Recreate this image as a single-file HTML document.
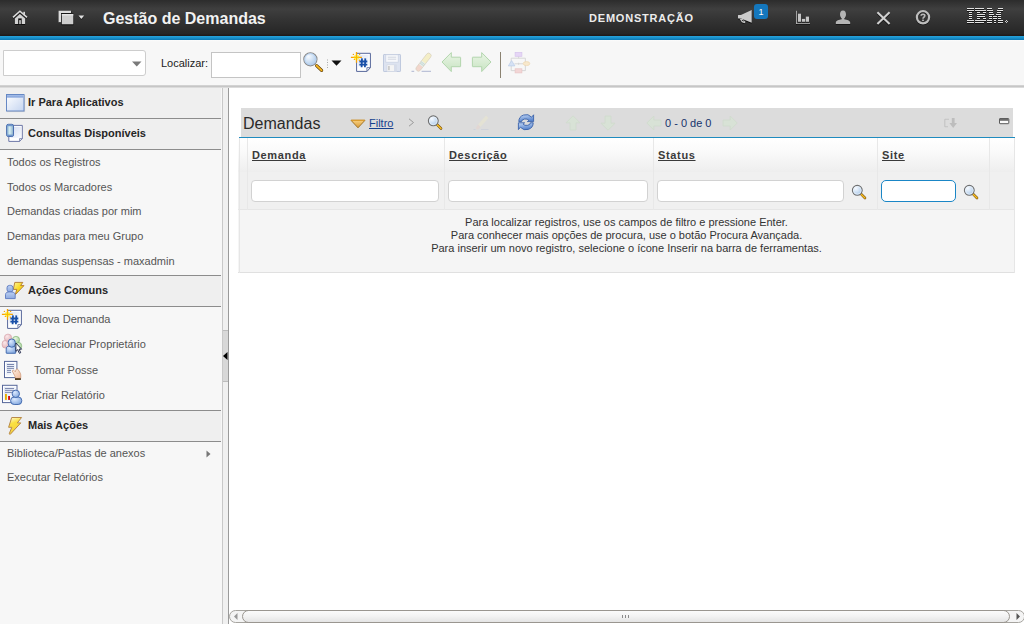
<!DOCTYPE html>
<html><head><meta charset="utf-8">
<style>
*{box-sizing:border-box;margin:0;padding:0}
html,body{width:1024px;height:624px;overflow:hidden;background:#fff;font-family:"Liberation Sans",sans-serif;position:relative}
.a{position:absolute}
svg{position:absolute;overflow:visible}
#hdr{left:0;top:0;width:1024px;height:36px;background:linear-gradient(#2c2c2c 0px,#3f3f3f 9px,#333 20px,#262626 34px,#1f1b1b 35px)}
#blue{left:0;top:36px;width:1024px;height:4px;background:linear-gradient(#29a3da,#1891cc 50%,#0e78b3)}
#tb{left:0;top:40px;width:1024px;height:45px;background:linear-gradient(#fcfcfc 0,#f7f7f7 2px)}
#tbb{left:0;top:85px;width:1024px;height:3px;background:linear-gradient(#d8d8d8,#c6c6c6,#e6e6e6)}
.title{color:#f2f2f2;font-weight:bold;font-size:16px;line-height:20px;white-space:nowrap}
.demo{color:#ececec;font-weight:bold;font-size:11px;letter-spacing:0.8px;line-height:14px;white-space:nowrap}
#left{left:0;top:88px;width:222px;height:536px;background:#f7f7f7}
#split{left:222px;top:88px;width:7px;height:536px;background:#f0f0f0;border-left:1px solid #c8c8c8;border-right:1px solid #9a9a9a}
#main{left:229px;top:88px;width:795px;height:536px;background:#fff}
.sec{position:absolute;left:0;width:221px;height:31px;background:#efefef;border-bottom:1px solid #8c8c8c}
.sec span{position:absolute;left:28px;top:8px;font-weight:bold;font-size:11px;line-height:13px;color:#262626;white-space:nowrap}
.it{position:absolute;left:7px;font-size:11px;line-height:13px;color:#555;white-space:nowrap}
.ai{position:absolute;left:34px;font-size:11px;line-height:13px;color:#555;white-space:nowrap}
.inp{position:absolute;background:#fff;border:1px solid #c9c9c9}
.th{position:absolute;top:149px;font-weight:bold;font-size:11px;letter-spacing:0.65px;line-height:13px;color:#3a3a3a;text-decoration:underline;white-space:nowrap}
.msg{position:absolute;left:238px;width:777px;text-align:center;font-size:11px;line-height:13px;color:#333;white-space:nowrap}
</style></head><body>
<div id="hdr" class="a"></div>
<div id="blue" class="a"></div>
<div id="tb" class="a"></div>
<div id="tbb" class="a"></div>

<!-- header icons -->
<svg style="left:12px;top:10px" width="16" height="17" viewBox="0 0 16 17">
  <path d="M1 8.2 L7.9 2 L15 8.2" fill="none" stroke="#0e0e0e" stroke-width="1.7"/>
  <path d="M2.9 9.2 L7.9 4.9 L13.1 9.2 V15.1 H2.9 Z" fill="#0e0e0e"/>
  <path d="M1 7.4 L7.9 1.2 L15 7.4" fill="none" stroke="#dcdcdc" stroke-width="1.6"/>
  <rect x="11.3" y="1.8" width="1.7" height="3.4" fill="#d4d4d4"/>
  <path d="M2.9 8.4 L7.9 4.1 L13.1 8.4 V14.1 H2.9 Z" fill="#d2d2d2"/>
  <rect x="6.2" y="8.4" width="3.5" height="5.7" fill="#111"/>
  <rect x="7.2" y="10.1" width="1.6" height="4" fill="#cfcfcf"/>
</svg>
<svg style="left:58px;top:10px" width="28" height="16" viewBox="0 0 28 16">
  <path d="M1 1.6 H13.4 V3.8 H3.4 V13.1 H1 Z" fill="#0e0e0e"/>
  <path d="M0.6 0.8 H13 V3 H3 V12.3 H0.6 Z" fill="#dcdcdc"/>
  <rect x="3.6" y="4.7" width="11.9" height="10.6" fill="#0e0e0e"/>
  <rect x="3.1" y="3.4" width="12.4" height="11.2" fill="#141414"/>
  <rect x="3.8" y="4" width="11.5" height="10.3" rx="0.4" fill="#cdcdcd"/>
  <rect x="3.8" y="4" width="11.5" height="1.6" rx="0.4" fill="#e4e4e4"/>
  <path d="M20.5 6.3 L26.2 6.3 L23.35 9.8 Z" fill="#0e0e0e"/>
  <path d="M20.5 5.6 L26.2 5.6 L23.35 9 Z" fill="#e0e0e0"/>
</svg>
<div class="a title" style="left:103px;top:9px">Gestão de Demandas</div>
<div class="a demo" style="left:589px;top:11px">DEMONSTRAÇÃO</div>

<!-- megaphone -->
<svg style="left:737px;top:9px" width="16" height="16" viewBox="0 0 16 16">
  <g transform="translate(0,0.9)" fill="#0e0e0e">
    <path d="M1 6.3 Q1 5.9 1.5 5.9 L3.9 5.9 L14.7 1 V13.8 L4 9.6 H1.5 Q1 9.6 1 9.1 Z"/>
    <path d="M2.6 9.8 L5.4 9.8 L8.6 12.9 L7.6 14.2 L4.8 13.3 Z"/>
  </g>
  <path d="M1 6.3 Q1 5.9 1.5 5.9 L3.9 5.9 L14.7 1 V13.8 L4 9.6 H1.5 Q1 9.6 1 9.1 Z" fill="#cbcbcb"/>
  <path d="M2.6 9.8 L5.4 9.8 L8.6 12.9 L7.6 14.2 L4.8 13.3 Z" fill="#c4c4c4"/>
  <path d="M4.6 10.9 L6 10.9 L7.3 12.4 L5.6 12.1 Z" fill="#1a1a1a"/>
</svg>
<div class="a" style="left:754px;top:4px;width:14px;height:15px;background:#1477bd;border-radius:3px;color:#fff;font-size:9px;font-weight:normal;line-height:16px;text-align:center">1</div>

<!-- chart -->
<svg style="left:795px;top:10px" width="16" height="16" viewBox="0 0 16 16">
  <g fill="#0e0e0e" transform="translate(0,0.9)">
    <rect x="1.1" y="0.8" width="0.8" height="13"/><rect x="1" y="12.9" width="14" height="0.8"/>
    <rect x="3" y="3.7" width="3" height="8.1"/><rect x="6.9" y="8.9" width="3.3" height="2.9"/><rect x="10.8" y="6.6" width="3.2" height="5.2"/>
  </g>
  <g fill="#c6c6c6">
    <rect x="1.1" y="0.8" width="0.8" height="13"/><rect x="1" y="12.9" width="14" height="0.8"/>
    <rect x="3" y="3.7" width="3" height="8.1"/><rect x="6.9" y="8.9" width="3.3" height="2.9"/><rect x="10.8" y="6.6" width="3.2" height="5.2"/>
  </g>
</svg>
<!-- user -->
<svg style="left:835px;top:10px" width="16" height="16" viewBox="0 0 16 16">
  <path d="M8 0.5 C10.3 0.5 11 2.5 11 4.5 C11 6.5 10 8 9.3 8.6 L9.3 9.3 C12 10 15 10.5 15.2 12.5 V14 H0.8 V12.5 C1 10.5 4 10 6.7 9.3 L6.7 8.6 C6 8 5 6.5 5 4.5 C5 2.5 5.7 0.5 8 0.5 Z" fill="#111" transform="translate(0,0.8)"/>
  <path d="M8 0.5 C10.3 0.5 11 2.5 11 4.5 C11 6.5 10 8 9.3 8.6 L9.3 9.3 C12 10 15 10.5 15.2 12.5 V14 H0.8 V12.5 C1 10.5 4 10 6.7 9.3 L6.7 8.6 C6 8 5 6.5 5 4.5 C5 2.5 5.7 0.5 8 0.5 Z" fill="#b4b4b4"/>
</svg>
<!-- X -->
<svg style="left:876px;top:11px" width="15" height="14" viewBox="0 0 15 14">
  <path d="M1.4 1.2 L13.6 13 M13.6 1.2 L1.4 13" stroke="#0e0e0e" stroke-width="2.3" transform="translate(0,0.8)"/>
  <path d="M1.4 1.2 L13.6 13 M13.6 1.2 L1.4 13" stroke="#d0d0d0" stroke-width="2.1"/>
</svg>
<!-- help -->
<svg style="left:915px;top:10px" width="16" height="16" viewBox="0 0 16 16">
  <circle cx="8" cy="7.3" r="6.1" fill="none" stroke="#0e0e0e" stroke-width="2.2" transform="translate(0,0.8)"/>
  <circle cx="8" cy="7.3" r="6.1" fill="none" stroke="#bdbdbd" stroke-width="2.2"/>
  <path d="M6.2 5.8 C6.2 3.7 9.8 3.7 9.8 5.8 C9.8 7.1 8 7.2 8 8.8" fill="none" stroke="#b8b8b8" stroke-width="1.6"/>
  <rect x="7.1" y="9.6" width="1.8" height="1.4" fill="#b8b8b8"/>
</svg>
<!-- IBM -->
<svg style="left:966px;top:8px" width="44" height="17" viewBox="0 0 44 17" shape-rendering="crispEdges"><rect x="1" y="1" width="7" height="1" fill="#151515"/><rect x="9" y="1" width="9" height="1" fill="#151515"/><rect x="21" y="1" width="5" height="1" fill="#151515"/><rect x="32" y="1" width="5" height="1" fill="#151515"/><rect x="1" y="3" width="7" height="1" fill="#151515"/><rect x="9" y="3" width="11" height="1" fill="#151515"/><rect x="21" y="3" width="6" height="1" fill="#151515"/><rect x="31" y="3" width="6" height="1" fill="#151515"/><rect x="3" y="5" width="3" height="1" fill="#151515"/><rect x="11" y="5" width="3" height="1" fill="#151515"/><rect x="17" y="5" width="3" height="1" fill="#151515"/><rect x="23" y="5" width="4" height="1" fill="#151515"/><rect x="31" y="5" width="4" height="1" fill="#151515"/><rect x="3" y="7" width="3" height="1" fill="#151515"/><rect x="11" y="7" width="8" height="1" fill="#151515"/><rect x="23" y="7" width="5" height="1" fill="#151515"/><rect x="30" y="7" width="5" height="1" fill="#151515"/><rect x="3" y="9" width="3" height="1" fill="#151515"/><rect x="11" y="9" width="8" height="1" fill="#151515"/><rect x="23" y="9" width="3" height="1" fill="#151515"/><rect x="27" y="9" width="4" height="1" fill="#151515"/><rect x="32" y="9" width="3" height="1" fill="#151515"/><rect x="3" y="11" width="3" height="1" fill="#151515"/><rect x="11" y="11" width="3" height="1" fill="#151515"/><rect x="17" y="11" width="3" height="1" fill="#151515"/><rect x="23" y="11" width="3" height="1" fill="#151515"/><rect x="27" y="11" width="4" height="1" fill="#151515"/><rect x="32" y="11" width="3" height="1" fill="#151515"/><rect x="1" y="13" width="7" height="1" fill="#151515"/><rect x="9" y="13" width="11" height="1" fill="#151515"/><rect x="21" y="13" width="5" height="1" fill="#151515"/><rect x="28" y="13" width="2" height="1" fill="#151515"/><rect x="32" y="13" width="5" height="1" fill="#151515"/><rect x="1" y="15" width="7" height="1" fill="#151515"/><rect x="9" y="15" width="9" height="1" fill="#151515"/><rect x="21" y="15" width="5" height="1" fill="#151515"/><rect x="28" y="15" width="2" height="1" fill="#151515"/><rect x="32" y="15" width="5" height="1" fill="#151515"/><rect x="1" y="0" width="7" height="1" fill="#e2e2e2"/><rect x="9" y="0" width="9" height="1" fill="#e2e2e2"/><rect x="21" y="0" width="5" height="1" fill="#e2e2e2"/><rect x="32" y="0" width="5" height="1" fill="#e2e2e2"/><rect x="1" y="2" width="7" height="1" fill="#e2e2e2"/><rect x="9" y="2" width="11" height="1" fill="#e2e2e2"/><rect x="21" y="2" width="6" height="1" fill="#e2e2e2"/><rect x="31" y="2" width="6" height="1" fill="#e2e2e2"/><rect x="3" y="4" width="3" height="1" fill="#e2e2e2"/><rect x="11" y="4" width="3" height="1" fill="#e2e2e2"/><rect x="17" y="4" width="3" height="1" fill="#e2e2e2"/><rect x="23" y="4" width="4" height="1" fill="#e2e2e2"/><rect x="31" y="4" width="4" height="1" fill="#e2e2e2"/><rect x="3" y="6" width="3" height="1" fill="#e2e2e2"/><rect x="11" y="6" width="8" height="1" fill="#e2e2e2"/><rect x="23" y="6" width="5" height="1" fill="#e2e2e2"/><rect x="30" y="6" width="5" height="1" fill="#e2e2e2"/><rect x="3" y="8" width="3" height="1" fill="#e2e2e2"/><rect x="11" y="8" width="8" height="1" fill="#e2e2e2"/><rect x="23" y="8" width="3" height="1" fill="#e2e2e2"/><rect x="27" y="8" width="4" height="1" fill="#e2e2e2"/><rect x="32" y="8" width="3" height="1" fill="#e2e2e2"/><rect x="3" y="10" width="3" height="1" fill="#e2e2e2"/><rect x="11" y="10" width="3" height="1" fill="#e2e2e2"/><rect x="17" y="10" width="3" height="1" fill="#e2e2e2"/><rect x="23" y="10" width="3" height="1" fill="#e2e2e2"/><rect x="27" y="10" width="4" height="1" fill="#e2e2e2"/><rect x="32" y="10" width="3" height="1" fill="#e2e2e2"/><rect x="1" y="12" width="7" height="1" fill="#e2e2e2"/><rect x="9" y="12" width="11" height="1" fill="#e2e2e2"/><rect x="21" y="12" width="5" height="1" fill="#e2e2e2"/><rect x="28" y="12" width="2" height="1" fill="#e2e2e2"/><rect x="32" y="12" width="5" height="1" fill="#e2e2e2"/><rect x="1" y="14" width="7" height="1" fill="#e2e2e2"/><rect x="9" y="14" width="9" height="1" fill="#e2e2e2"/><rect x="21" y="14" width="5" height="1" fill="#e2e2e2"/><rect x="28" y="14" width="2" height="1" fill="#e2e2e2"/><rect x="32" y="14" width="5" height="1" fill="#e2e2e2"/><rect x="40" y="12" width="1" height="1" fill="#ccc"/><rect x="39" y="13" width="1" height="1" fill="#ccc"/><rect x="41" y="13" width="1" height="1" fill="#ccc"/><rect x="40" y="14" width="1" height="1" fill="#ccc"/></svg>

<!-- toolbar -->
<div class="inp" style="left:3px;top:50px;width:143px;height:26px;border-radius:0 3px 3px 0;border-color:#cdcdcd"></div>
<svg style="left:132px;top:61px" width="10" height="6" viewBox="0 0 10 6"><path d="M0 0.5 H9.5 L4.75 5.5 Z" fill="#7a7a7a"/></svg>
<div class="a" style="left:161px;top:57px;font-size:11px;line-height:13px;color:#222;white-space:nowrap">Localizar:</div>
<div class="inp" style="left:211px;top:52px;width:90px;height:26px;border-color:#c4c4c4"></div>
<!-- magnifier big -->
<svg style="left:303px;top:52px" width="21" height="21" viewBox="0 0 21 21">
  <defs><radialGradient id="lens" cx="0.35" cy="0.3" r="0.75"><stop offset="0" stop-color="#f6faff"/><stop offset="0.6" stop-color="#c8dcf2"/><stop offset="1" stop-color="#a8c6ea"/></radialGradient></defs>
  <path d="M13.6 13.6 L18.6 18.4" stroke="#5a3a08" stroke-width="3.2" stroke-linecap="round"/>
  <path d="M13.6 13.6 L18.6 18.4" stroke="#f8b820" stroke-width="1.9" stroke-linecap="round"/>
  <circle cx="7.4" cy="7.3" r="6.6" fill="url(#lens)" stroke="#8a8a8a" stroke-width="1.1"/>
  <circle cx="7.4" cy="7.3" r="5.6" fill="none" stroke="#b4d0f0" stroke-width="0.9"/>
</svg>
<svg style="left:326px;top:59px" width="16" height="9" viewBox="0 0 16 9">
  <g fill="#aaa"><rect x="1" y="0.5" width="1" height="1"/><rect x="1" y="3" width="1" height="1"/><rect x="1" y="5.5" width="1" height="1"/><rect x="1" y="8" width="1" height="1"/></g>
  <path d="M5.5 1.5 H15.5 L10.5 6.8 Z" fill="#111"/>
</svg>
<!-- new doc -->
<svg style="left:349px;top:49px" width="26" height="26" viewBox="0 0 26 26">
  <path d="M7.6 4.3 H21.4 V18.6 L17.9 22.4 H7.6 Z" fill="#fff" stroke="#56669a" stroke-width="1"/>
  <rect x="9" y="5.8" width="10.6" height="11.6" fill="url(#docg)"/>
  <path d="M17.9 22.4 V18.6 H21.4 Z" fill="#f4f4f4" stroke="#56669a" stroke-width="0.8" stroke-linejoin="round"/>
  <g stroke="#1a50a8" stroke-width="1.8"><path d="M13 9.4 L12.6 18.3 M16.3 9.4 L15.9 18.3 M10.4 12.5 H18.3 M10.4 15.6 H18.3"/></g>
  <g stroke="#f8a400" stroke-width="1.3"><path d="M7.5 3 V13.8 M1.9 8.3 H12.9"/></g>
  <g fill="#f8a400"><circle cx="4.4" cy="5.4" r="0.7"/><circle cx="10.6" cy="5.4" r="0.7"/><circle cx="5.4" cy="10.4" r="0.7"/><circle cx="10.4" cy="11.2" r="0.7"/></g>
  <circle cx="7.5" cy="8.3" r="2.6" fill="#fff040" opacity="0.9"/>
  <path d="M7.5 5.5 V11.1 M4.7 8.3 H10.3" stroke="#f8b800" stroke-width="1"/>
</svg>
<!-- save faded -->
<svg style="left:383px;top:54px" width="18" height="18" viewBox="0 0 18 18">
  <rect x="0.5" y="0.5" width="17" height="17" rx="0.6" fill="#dde3f0" stroke="#bfc9de" stroke-width="1"/>
  <rect x="2.8" y="0.8" width="12.4" height="7.4" fill="#f7f8fb" stroke="#c9d1e2" stroke-width="0.7"/>
  <path d="M4.8 3.2 H13.2 M4.8 5.2 H13.2" stroke="#cdd2dc" stroke-width="0.9"/>
  <rect x="4" y="10.8" width="9.5" height="6.7" fill="#f4f4f4" stroke="#cfd5e3" stroke-width="0.6"/>
  <rect x="5" y="12" width="1.8" height="4.2" fill="#cccccc"/>
  <rect x="11" y="11" width="2.5" height="6.5" fill="#d6dcea"/>
</svg>
<!-- eraser faded -->
<svg style="left:411px;top:53px" width="21" height="20" viewBox="0 0 21 20">
  <path d="M0.5 18.3 H3.2 M10.6 18.3 H20" stroke="#bcc2d8" stroke-width="1.2"/>
  <g transform="translate(6.9,16.4) rotate(-52)">
    <clipPath id="erc"><rect x="-1.6" y="-2.5" width="21.5" height="5" rx="2.4"/></clipPath>
    <g clip-path="url(#erc)">
      <rect x="-2" y="-3" width="7" height="6" fill="#f2d6cc"/>
      <rect x="5" y="-3" width="4.2" height="6" fill="#e2eeea"/>
      <rect x="6" y="-3" width="0.8" height="6" fill="#c4d4d0"/>
      <rect x="7.6" y="-3" width="0.8" height="6" fill="#c4d4d0"/>
      <rect x="9.2" y="-3" width="11" height="6" fill="#f4eec6"/>
    </g>
    <rect x="-1.6" y="-2.5" width="21.5" height="5" rx="2.4" fill="none" stroke="#d4ccbc" stroke-width="0.6"/>
  </g>
</svg>
<!-- arrows -->
<svg style="left:441px;top:52px" width="21" height="21" viewBox="0 0 21 21">
  <path d="M1 10 L10.3 0.6 V5.2 H19.3 Q19.6 5.2 19.6 5.6 V14.3 Q19.6 14.7 19.3 14.7 H10.3 V19.6 Z" fill="url(#ga)" stroke="#b3d6ae" stroke-width="1" stroke-linejoin="round"/>
  <defs><linearGradient id="ga" x1="0" y1="0" x2="0" y2="1"><stop offset="0" stop-color="#eaf5e6"/><stop offset="1" stop-color="#c8e4c2"/></linearGradient></defs>
</svg>
<svg style="left:471px;top:52px" width="21" height="21" viewBox="0 0 21 21">
  <path d="M20 10 L10.7 0.6 V5.2 H1.7 Q1.4 5.2 1.4 5.6 V14.3 Q1.4 14.7 1.7 14.7 H10.7 V19.6 Z" fill="url(#ga)" stroke="#b3d6ae" stroke-width="1" stroke-linejoin="round"/>
</svg>
<div class="a" style="left:500px;top:52px;width:1px;height:26px;background:#8b8271"></div>
<!-- workflow faded -->
<svg style="left:508px;top:52px" width="22" height="22" viewBox="0 0 22 22">
  <g fill="none" stroke="#d4d4d4" stroke-width="0.9"><path d="M3.2 12.3 V6.2 H17.4 V12.3 M3.2 12.3 V18.6 H17.4 V12.3 M6.5 11.8 H15 M10.6 10.8 V12.8 M10.6 4.2 V6.2"/></g>
  <rect x="7.1" y="0.4" width="6.8" height="3.9" fill="#e6d6f6" stroke="#d6c4ec" stroke-width="0.7"/>
  <path d="M0.3 13.9 L3.6 8.6 L6.9 13.9 Z" fill="#d6e2f4" stroke="#bccde8" stroke-width="0.7"/>
  <ellipse cx="18.5" cy="11.6" rx="3.3" ry="2" fill="#f8e8cc" stroke="#ecd6b0" stroke-width="0.7"/>
  <rect x="7.1" y="16.8" width="6.8" height="4.1" fill="#f2d6d6" stroke="#e8c4c4" stroke-width="0.7"/>
</svg>

<!-- left panel -->
<div id="left" class="a"></div>
<div class="sec" style="top:88px"><span>Ir Para Aplicativos</span></div>
<div class="sec" style="top:119px"><span>Consultas Disponíveis</span></div>
<div class="it" style="top:156px">Todos os Registros</div>
<div class="it" style="top:181px">Todos os Marcadores</div>
<div class="it" style="top:205px">Demandas criadas por mim</div>
<div class="it" style="top:230px">Demandas para meu Grupo</div>
<div class="it" style="top:255px">demandas suspensas - maxadmin</div>
<div class="a" style="left:0;top:275px;width:221px;height:1px;background:#8c8c8c"></div>
<div class="sec" style="top:276px;height:31px"><span>Ações Comuns</span></div>
<div class="ai" style="top:313px">Nova Demanda</div>
<div class="ai" style="top:338px">Selecionar Proprietário</div>
<div class="ai" style="top:364px">Tomar Posse</div>
<div class="ai" style="top:389px">Criar Relatório</div>
<div class="a" style="left:0;top:410px;width:221px;height:1px;background:#8c8c8c"></div>
<div class="sec" style="top:411px;height:31px"><span>Mais Ações</span></div>
<div class="it" style="top:447px">Biblioteca/Pastas de anexos</div>
<svg style="left:206px;top:450px" width="5" height="8" viewBox="0 0 5 8"><path d="M0.5 0.5 L4.5 4 L0.5 7.5 Z" fill="#777"/></svg>
<div class="it" style="top:471px">Executar Relatórios</div>

<!-- left icons -->
<svg style="left:2px;top:90px" width="26" height="26" viewBox="0 0 26 26">
  <defs><linearGradient id="win" x1="0" y1="0" x2="1" y2="1"><stop offset="0" stop-color="#ffffff"/><stop offset="1" stop-color="#c4d4f0"/></linearGradient>
  <linearGradient id="winbar" x1="0" y1="0" x2="0" y2="1"><stop offset="0" stop-color="#a8c0ea"/><stop offset="1" stop-color="#7e9ed8"/></linearGradient></defs>
  <path d="M5 21.6 H22.6 V5" fill="none" stroke="#d0d0d0" stroke-width="1"/>
  <rect x="4.5" y="4.5" width="17.5" height="16.5" fill="url(#win)" stroke="#6688c4" stroke-width="1"/>
  <rect x="5" y="5" width="16.5" height="2.6" fill="url(#winbar)"/>
</svg>
<svg style="left:2px;top:120px" width="26" height="26" viewBox="0 0 26 26">
  <defs><linearGradient id="cyl" x1="0" y1="0" x2="1" y2="0"><stop offset="0" stop-color="#7aa4cc"/><stop offset="0.45" stop-color="#d8f0f2"/><stop offset="1" stop-color="#86aac8"/></linearGradient>
  <linearGradient id="pg" x1="0" y1="0" x2="1" y2="1"><stop offset="0" stop-color="#d4dcf0"/><stop offset="1" stop-color="#f8faff"/></linearGradient></defs>
  <path d="M6.8 5.4 H20.3 V18.6 L17.6 21.4 H6.8 Z" fill="#fff" stroke="#6c76a6" stroke-width="1"/>
  <rect x="8.5" y="6.8" width="10.6" height="11" fill="url(#pg)"/>
  <path d="M17.6 21.4 V18.6 H20.3 Z" fill="#f6f6f6" stroke="#6c76a6" stroke-width="0.8" stroke-linejoin="round"/>
  <rect x="4.6" y="4.3" width="6.9" height="12.2" rx="1.6" fill="url(#cyl)" stroke="#4a6eb0" stroke-width="1"/>
  <rect x="5.1" y="4.8" width="5.9" height="1.4" fill="#6f96cc"/>
  <rect x="5.1" y="14.6" width="5.9" height="1.4" fill="#6f96cc"/>
</svg>
<svg style="left:5px;top:282px" width="20" height="18" viewBox="0 0 20 18">
  <defs><linearGradient id="bolt" x1="0" y1="0" x2="1" y2="1"><stop offset="0" stop-color="#fff6a0"/><stop offset="0.5" stop-color="#f8d820"/><stop offset="1" stop-color="#e8b800"/></linearGradient>
  <linearGradient id="pers" x1="0" y1="0" x2="0" y2="1"><stop offset="0" stop-color="#bcd0f2"/><stop offset="1" stop-color="#8eaae0"/></linearGradient></defs>
  <path d="M9.8 0.4 H17.8 L15.6 3.6 H19 L10.2 12.8 L11.8 7.4 H8.3 Z" fill="url(#bolt)" stroke="#b0782c" stroke-width="0.9" stroke-linejoin="round"/>
  <rect x="2" y="3.4" width="6" height="6.6" rx="2.4" fill="url(#pers)" stroke="#5a78c0" stroke-width="0.9"/>
  <path d="M0.5 16.6 V12.6 C0.5 10.6 2 9.9 5 9.9 C8 9.9 10.2 10.6 10.2 12.6 V16.6 Z" fill="url(#pers)" stroke="#5a78c0" stroke-width="0.9" stroke-linejoin="round"/>
</svg>
<svg style="left:0px;top:306px" width="26" height="26" viewBox="0 0 26 26">
  <defs><linearGradient id="docg" x1="0" y1="0" x2="1" y2="1"><stop offset="0" stop-color="#dfe6f4"/><stop offset="1" stop-color="#f8faff"/></linearGradient></defs>
  <path d="M7.6 4.3 H21.4 V18.6 L17.9 22.4 H7.6 Z" fill="#fff" stroke="#56669a" stroke-width="1"/>
  <rect x="9" y="5.8" width="10.6" height="11.6" fill="url(#docg)"/>
  <path d="M17.9 22.4 V18.6 H21.4 Z" fill="#f4f4f4" stroke="#56669a" stroke-width="0.8" stroke-linejoin="round"/>
  <g stroke="#1a50a8" stroke-width="1.8"><path d="M13 9.4 L12.6 18.3 M16.3 9.4 L15.9 18.3 M10.4 12.5 H18.3 M10.4 15.6 H18.3"/></g>
  <g stroke="#f8a400" stroke-width="1.3"><path d="M7.5 3 V13.8 M1.9 8.3 H12.9"/></g>
  <g fill="#f8a400"><circle cx="4.4" cy="5.4" r="0.7"/><circle cx="10.6" cy="5.4" r="0.7"/><circle cx="5.4" cy="10.4" r="0.7"/><circle cx="10.4" cy="11.2" r="0.7"/></g>
  <circle cx="7.5" cy="8.3" r="2.6" fill="#fff040" opacity="0.9"/>
  <path d="M7.5 5.5 V11.1 M4.7 8.3 H10.3" stroke="#f8b800" stroke-width="1"/>
</svg>
<svg style="left:0px;top:332px" width="26" height="26" viewBox="0 0 26 26">
  <defs>
   <radialGradient id="pk" cx="0.35" cy="0.3" r="0.8"><stop offset="0" stop-color="#fbe8ea"/><stop offset="1" stop-color="#e0b0b6"/></radialGradient>
   <radialGradient id="gr" cx="0.35" cy="0.3" r="0.8"><stop offset="0" stop-color="#e6f6e0"/><stop offset="1" stop-color="#a6d09a"/></radialGradient>
   <radialGradient id="bl" cx="0.35" cy="0.3" r="0.8"><stop offset="0" stop-color="#dceaff"/><stop offset="1" stop-color="#7ea4dc"/></radialGradient>
  </defs>
  <rect x="2.2" y="8.4" width="7" height="7.6" rx="3" fill="url(#pk)" stroke="#d8a8b0" stroke-width="0.8"/>
  <rect x="4.4" y="2.2" width="7.2" height="7.2" rx="3.4" fill="url(#pk)" stroke="#d8a8b0" stroke-width="0.8"/>
  <rect x="14" y="10.5" width="7.6" height="7" rx="3" fill="url(#gr)" stroke="#86b87a" stroke-width="0.8"/>
  <rect x="12.5" y="4.4" width="7" height="7" rx="3.3" fill="url(#gr)" stroke="#86b87a" stroke-width="0.8"/>
  <path d="M6.2 21 V17 C6.2 14.6 7.6 13.9 11 13.9 C14.4 13.9 15.7 14.6 15.7 17 V21 Q15.7 21.3 15.3 21.3 H6.6 Q6.2 21.3 6.2 21 Z" fill="url(#bl)" stroke="#3c64aa" stroke-width="0.9"/>
  <rect x="8.2" y="7" width="7.1" height="8.2" rx="3.4" fill="url(#bl)" stroke="#3c64aa" stroke-width="0.9"/>
  <path d="M15.9 11 V19.4 L17.7 17.7 L19.4 21.3 L20.7 20.7 L19.1 17.2 H21.6 Z" fill="#fff" stroke="#141c40" stroke-width="0.9" stroke-linejoin="round"/>
</svg>
<svg style="left:0px;top:358px" width="26" height="26" viewBox="0 0 26 26">
  <defs><linearGradient id="hand" x1="0" y1="0" x2="1" y2="1"><stop offset="0" stop-color="#fff2e6"/><stop offset="1" stop-color="#f0b898"/></linearGradient></defs>
  <rect x="4.5" y="3.4" width="12.4" height="16.2" fill="#fff" stroke="#56669a" stroke-width="1"/>
  <rect x="6.2" y="5" width="9" height="12.5" fill="url(#docg)"/>
  <path d="M7 6.5 H14 M7 8.5 H14 M7 10.4 H14 M7 12.4 H11 M7 14.4 H11" stroke="#6e7ca6" stroke-width="0.9"/>
  <path d="M12.3 13 C12.3 12.1 13.4 11.8 14.2 12.6 L15.3 13.8 L16 11.6 C16.5 10.9 17.6 10.9 18.2 11.7 L20.4 15.3 C20.8 16.3 20.9 18.5 20.7 20.4 H15.2 L15 18.6 C14.4 17 13.4 15.4 12.3 13 Z" fill="url(#hand)" stroke="#c89070" stroke-width="0.7" stroke-linejoin="round"/>
  <rect x="15" y="20.3" width="5.8" height="1.6" fill="#2c1c0a"/>
  <rect x="15.6" y="20.7" width="4.6" height="0.6" fill="#8a6020"/>
</svg>
<svg style="left:0px;top:382px" width="26" height="26" viewBox="0 0 26 26">
  <rect x="2.5" y="3.3" width="14.5" height="17.3" fill="#fff" stroke="#56669a" stroke-width="1"/>
  <rect x="4" y="4.8" width="11.5" height="14.2" fill="url(#docg)"/>
  <path d="M5 6.5 H14 M5 8.4 H14 M5 10.4 H12" stroke="#7480a8" stroke-width="0.9"/>
  <rect x="5" y="11.9" width="1.9" height="6" fill="#e8b000"/>
  <rect x="8.1" y="14" width="1.9" height="3.9" fill="#d41010"/>
  <rect x="10.6" y="15" width="11.2" height="7.5" rx="3.6" fill="url(#bl)" stroke="#3c64aa" stroke-width="0.9"/>
  <circle cx="15.8" cy="11.8" r="3.7" fill="url(#bl)" stroke="#3c64aa" stroke-width="0.9"/>
</svg>
<svg style="left:2px;top:412px" width="26" height="26" viewBox="0 0 26 26">
  <defs><linearGradient id="bolt2" x1="0" y1="0" x2="0.3" y2="1"><stop offset="0" stop-color="#fffbe0"/><stop offset="0.4" stop-color="#fae040"/><stop offset="1" stop-color="#f4d040"/></linearGradient></defs>
  <path d="M9.7 5.5 H19.6 L15.3 10.9 H18.8 L8.2 22.4 L7.2 21.8 L9.8 15.3 H6.6 Z" fill="url(#bolt2)" stroke="#b88a4a" stroke-width="1" stroke-linejoin="round"/>
</svg>

<!-- splitter -->
<div id="split" class="a"></div>
<div class="a" style="left:223px;top:330px;width:5px;height:52px;background:#d8d8d8;border-top:1px solid #bcbcbc;border-bottom:1px solid #bcbcbc"></div>
<svg style="left:223px;top:352px" width="5" height="8" viewBox="0 0 5 8"><path d="M4.5 0 V8 L0 4 Z" fill="#000"/></svg>

<!-- main -->
<div id="main" class="a"></div>
<div class="a" style="left:241px;top:108px;width:772px;height:29px;background:#dcdcdc"></div>
<div class="a" style="left:239px;top:137px;width:776px;height:1px;background:#1f8bbf"></div>
<div class="a" style="left:243px;top:115px;font-size:16px;line-height:18px;color:#2a2a2a;white-space:nowrap">Demandas</div>
<svg style="left:350px;top:119px" width="16" height="10" viewBox="0 0 16 10">
  <defs><linearGradient id="ft" x1="0" y1="0" x2="0" y2="1"><stop offset="0" stop-color="#f8d080"/><stop offset="1" stop-color="#d89a38"/></linearGradient></defs>
  <path d="M1 1.3 H15 L8 8.8 Z" fill="url(#ft)" stroke="#9a6a18" stroke-width="0.9" stroke-linejoin="round"/>
  <path d="M1.3 1.3 H14.7" stroke="#e0a030" stroke-width="1.2"/>
</svg>
<div class="a" style="left:369px;top:117px;font-size:11px;line-height:13px;color:#15418f;text-decoration:underline;white-space:nowrap">Filtro</div>
<svg style="left:408px;top:118px" width="7" height="9" viewBox="0 0 7 9"><path d="M1 0.8 L5.5 4.5 L1 8.2" fill="none" stroke="#9a9a9a" stroke-width="1"/></svg>
<!-- mag -->
<svg style="left:427px;top:114px" width="16" height="16" viewBox="0 0 16 16">
  <path d="M10.2 10.7 L14 14.5" stroke="#7a5010" stroke-width="2.6" stroke-linecap="round"/>
  <path d="M10.2 10.7 L14 14.5" stroke="#f8c020" stroke-width="1.4" stroke-linecap="round"/>
  <circle cx="6.3" cy="6.8" r="4.9" fill="url(#lens)" stroke="#6e6e6e" stroke-width="1.1"/>
  <circle cx="6.3" cy="6.8" r="3.9" fill="none" stroke="#f4f8fc" stroke-width="0.6"/>
</svg>
<!-- eraser faint -->
<svg style="left:473px;top:115px" width="16" height="16" viewBox="0 0 16 16" opacity="0.35">
  <path d="M0.5 14.5 H2.5 M8 14.5 H15.5" stroke="#b9c0d8" stroke-width="1"/>
  <path d="M13 0.5 L15.5 3 L7.5 12 L5 9.5 Z" fill="#f3eec8"/>
  <path d="M5 9.5 L7.5 12 L5.5 14 C4 15 2.8 14 3.2 12.5 Z" fill="#efcfc4"/>
</svg>
<!-- refresh -->
<svg style="left:517px;top:114px" width="18" height="17" viewBox="0 0 18 17">
  <defs><linearGradient id="rf" x1="0" y1="0" x2="0.3" y2="1"><stop offset="0" stop-color="#c4d8f6"/><stop offset="1" stop-color="#5884cc"/></linearGradient></defs>
  <path d="M1.8 7.6 A7.2 7 0 0 1 14.6 3.2 L16.6 0.8 V7.6 H10.4 L11.9 6.3 A3.9 2.6 0 0 0 4.6 7.6 Z" fill="url(#rf)" stroke="#3a62aa" stroke-width="0.9" stroke-linejoin="round"/>
  <path d="M16.2 8.8 A7.2 7 0 0 1 3.4 13.2 L1.4 15.6 V8.8 H7.6 L6.1 10.1 A3.9 2.6 0 0 0 13.4 8.8 Z" fill="url(#rf)" stroke="#3a62aa" stroke-width="0.9" stroke-linejoin="round"/>
</svg>
<!-- up/down faint -->
<svg style="left:565px;top:115px" width="16" height="16" viewBox="0 0 16 16">
  <path d="M8 0.8 L15 7.8 H11 V15 H5 V7.8 H1 Z" fill="#d8e2d6" stroke="#cfdacd" stroke-width="0.8"/>
</svg>
<svg style="left:600px;top:115px" width="16" height="16" viewBox="0 0 16 16">
  <path d="M8 15.2 L15 8.2 H11 V1 H5 V8.2 H1 Z" fill="#d8e2d6" stroke="#cfdacd" stroke-width="0.8"/>
</svg>
<svg style="left:646px;top:115px" width="16" height="16" viewBox="0 0 16 16">
  <path d="M0.8 8 L7.8 1 V5 H15 V11 H7.8 V15 Z" fill="#d8e2d6" stroke="#cfdacd" stroke-width="0.8"/>
</svg>
<div class="a" style="left:665px;top:117px;font-size:11px;line-height:13px;color:#17336b;white-space:nowrap">0 - 0 de 0</div>
<svg style="left:722px;top:115px" width="16" height="16" viewBox="0 0 16 16">
  <path d="M15.2 8 L8.2 1 V5 H1 V11 H8.2 V15 Z" fill="#d8e2d6" stroke="#cfdacd" stroke-width="0.8"/>
</svg>
<!-- export faint -->
<svg style="left:944px;top:118px" width="14" height="11" viewBox="0 0 14 11">
  <path d="M5 1.3 H1.3 Q0.8 1.3 0.8 1.8 V8.3 Q0.8 8.8 1.3 8.8 H4" fill="none" stroke="#c2c2c2" stroke-width="1.1"/>
  <path d="M7.8 0 H10.6 V5 H13 L9.2 9.9 L5.4 5 H7.8 Z" fill="#bdbdbd"/>
</svg>
<!-- minimize -->
<svg style="left:999px;top:118px" width="11" height="7" viewBox="0 0 11 7">
  <rect x="0.5" y="0.5" width="9.3" height="5.2" rx="0.5" fill="#fbfbfb" stroke="#5a5a5a" stroke-width="1"/>
  <rect x="0.8" y="0.8" width="8.7" height="2" fill="#6a6a6a"/>
</svg>

<!-- table -->
<div class="a" style="left:238px;top:138px;width:777px;height:34px;background:linear-gradient(#fff,#fafafa 40%,#eeeeee)"></div>
<div class="a" style="left:238px;top:172px;width:777px;height:38px;background:#f0f0f0"></div>
<div class="a" style="left:238px;top:209px;width:777px;height:1px;background:#e6e6e6"></div>
<div class="a" style="left:238px;top:210px;width:777px;height:63px;background:#f5f5f5;border-bottom:1px solid #e0e0e0"></div>
<div class="a" style="left:239px;top:138px;width:1px;height:135px;background:#e6e6e6"></div>
<div class="a" style="left:247px;top:138px;width:1px;height:72px;background:#e8e8e8"></div>
<div class="a" style="left:444px;top:138px;width:1px;height:72px;background:#e8e8e8"></div>
<div class="a" style="left:653px;top:138px;width:1px;height:72px;background:#e8e8e8"></div>
<div class="a" style="left:877px;top:138px;width:1px;height:72px;background:#e8e8e8"></div>
<div class="a" style="left:989px;top:138px;width:1px;height:72px;background:#e8e8e8"></div>
<div class="a" style="left:1014px;top:138px;width:1px;height:135px;background:#e6e6e6"></div>
<div class="th" style="left:252px">Demanda</div>
<div class="th" style="left:449px">Descrição</div>
<div class="th" style="left:658px">Status</div>
<div class="th" style="left:882px">Site</div>
<div class="inp" style="left:251px;top:180px;width:188px;height:22px;border-radius:4px;border-color:#d2d2d2"></div>
<div class="inp" style="left:448px;top:180px;width:200px;height:22px;border-radius:4px;border-color:#d2d2d2"></div>
<div class="inp" style="left:657px;top:180px;width:187px;height:22px;border-radius:4px;border-color:#d2d2d2"></div>
<div class="inp" style="left:881px;top:180px;width:75px;height:22px;border-radius:5px;border:1.5px solid #1a86c6"></div>
<svg style="left:851px;top:184px" width="16" height="16" viewBox="0 0 16 16">
  <path d="M10.2 10.2 L14 14.0" stroke="#7a5010" stroke-width="2.6" stroke-linecap="round"/>
  <path d="M10.2 10.2 L14 14.0" stroke="#f8c020" stroke-width="1.4" stroke-linecap="round"/>
  <circle cx="6.3" cy="6.3" r="4.9" fill="url(#lens)" stroke="#6e6e6e" stroke-width="1.1"/>
  <circle cx="6.3" cy="6.3" r="3.9" fill="none" stroke="#f4f8fc" stroke-width="0.6"/>
</svg>
<svg style="left:963px;top:184px" width="16" height="16" viewBox="0 0 16 16">
  <path d="M10.2 10.2 L14 14.0" stroke="#7a5010" stroke-width="2.6" stroke-linecap="round"/>
  <path d="M10.2 10.2 L14 14.0" stroke="#f8c020" stroke-width="1.4" stroke-linecap="round"/>
  <circle cx="6.3" cy="6.3" r="4.9" fill="url(#lens)" stroke="#6e6e6e" stroke-width="1.1"/>
  <circle cx="6.3" cy="6.3" r="3.9" fill="none" stroke="#f4f8fc" stroke-width="0.6"/>
</svg>
<div class="msg" style="top:216px">Para localizar registros, use os campos de filtro e pressione Enter.</div>
<div class="msg" style="top:229px">Para conhecer mais opções de procura, use o botão Procura Avançada.</div>
<div class="msg" style="top:242px">Para inserir um novo registro, selecione o ícone Inserir na barra de ferramentas.</div>

<!-- h scrollbar -->
<div class="a" style="left:229px;top:610px;width:795px;height:14px;background:#fff"></div>
<div class="a" style="left:229px;top:610px;width:796px;height:13px;border:1px solid #a6a49f;border-radius:7px;background:#f4f4f4"></div>
<div class="a" style="left:242px;top:610px;width:768px;height:13px;border:1px solid #9a9690;border-radius:7px;background:linear-gradient(#fbfbfb,#f2f2f2 50%,#e4e4e4)"></div>
<svg style="left:234px;top:613px" width="4" height="7" viewBox="0 0 4 7"><path d="M3.5 0 V7 L0 3.5 Z" fill="#999"/></svg>
<svg style="left:1016px;top:613px" width="4" height="7" viewBox="0 0 4 7"><path d="M0.5 0 V7 L4 3.5 Z" fill="#555"/></svg>
<div class="a" style="left:622px;top:615px;width:7px;height:3px;background:repeating-linear-gradient(90deg,#8a8a8a 0 1px,transparent 1px 3px)"></div>
</body></html>
